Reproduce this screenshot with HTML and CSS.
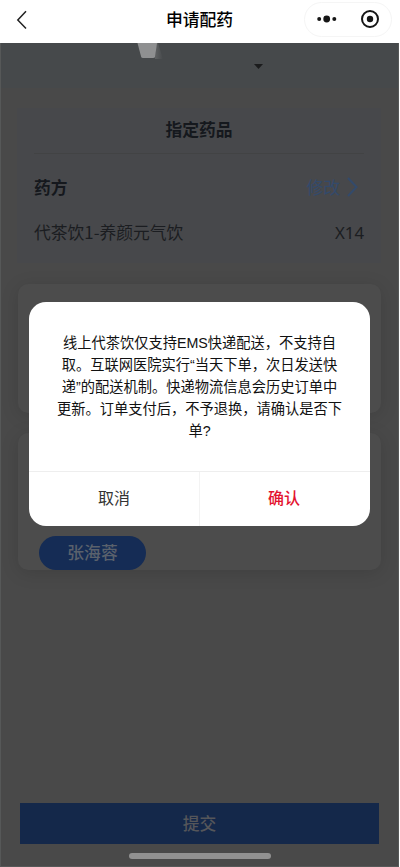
FILE: index.html
```html
<!DOCTYPE html>
<html lang="zh-CN">
<head>
<meta charset="utf-8">
<title>申请配药</title>
<link rel="stylesheet" href="styles.css">
</head>
<body>
<div class="app">
  <header class="nav">
    <svg class="back" width="12" height="20" viewBox="0 0 12 20"><path d="M10 1.200 1.800 10l8.200 8.500"/></svg>
    <h1 class="nav-title">申请配药</h1>
    <div class="capsule">
      <svg class="dots" width="20" height="10" viewBox="0 0 20 10"><circle cx="2.200" cy="5" r="2"/><circle cx="9.700" cy="5" r="3.400"/><circle cx="17.300" cy="5" r="2"/></svg>
      <span class="capsule-line"></span>
      <svg class="target" width="20" height="20" viewBox="0 0 20 20"><circle class="ring" cx="10" cy="10" r="8"/><circle cx="10" cy="10" r="3.200"/></svg>
    </div>
  </header>
  <main class="page">
    <div class="banner">
      <svg class="banner-art" width="40" height="20" viewBox="0 0 40 20"><defs><linearGradient id="fade"><stop offset="0" stop-color="#606263"/><stop offset="1" stop-color="#46494b"/></linearGradient></defs><path d="M19 0h2l5 16h-8z" fill="url(#fade)"/><path d="M.5 0H20L18 14Q17.800 15 16 15H6Q4.500 15 4.200 14Z" fill="#8f9091"/></svg>
      <svg class="caret" width="9" height="5" viewBox="0 0 9 5"><path d="M0 0h9L4.500 5z"/></svg>
    </div>
    <section class="drug-card">
      <h2 class="card-title">指定药品</h2>
      <div class="row row-head"><strong>药方</strong><span class="edit">修改<svg width="11" height="20" viewBox="0 0 11 20"><path d="M1 1l8.500 9L1 19"/></svg></span></div>
      <div class="row"><span>代茶饮1-养颜元气饮</span><span class="count">X14</span></div>
    </section>
    <section class="panel panel-first"></section>
    <section class="panel panel-second"><span class="pill">张海蓉</span></section>
    <button class="submit">提交</button>
    <div class="home-bar"></div>
  </main>
  <div class="dialog">
    <p class="message">线上代茶饮仅支持EMS快递配送，不支持自<br>取。互联网医院实行“当天下单，次日发送快<br>递”的配送机制。快递物流信息会历史订单中<br>更新。订单支付后，不予退换，请确认是否下<br>单?</p>
    <div class="actions"><button>取消</button><button class="confirm">确认</button></div>
  </div>
</div>
</body>
</html>
```
FILE: styles.css
```css
* { box-sizing: border-box; }
body { margin: 0; background: #fff; }
.app {
  position: relative;
  width: 399px;
  height: 867px;
  overflow: hidden;
  font-family: "Liberation Sans", "Noto Sans CJK SC", sans-serif;
}
h1, h2, p { margin: 0; }
button { border: 0; padding: 0; background: none; font: inherit; }

.nav {
  display: grid;
  grid-template-columns: 96px 1fr 96px;
  align-items: center;
  height: 43px;
  background: #fff;
}
.back { margin: -4px 0 0 16px; fill: none; stroke: #222; stroke-width: 1.5; }
.nav-title { text-align: center; font-size: 16.800px; line-height: 24px; font-weight: 500; color: #000; margin-top: -1px; }
.capsule {
  display: flex;
  align-items: center;
  width: 88px;
  height: 35px;
  margin: -5px 0 0 1px;
  padding: 0 12px;
  border: 1px solid #f5f5f5;
  border-radius: 18px;
  fill: #161616;
}
.capsule-line { width: 1px; height: 22px; margin: 0 12px 0 11px; background: #f0f0f0; }
.dots, .target { flex: none; }
.ring { fill: none; stroke: #161616; stroke-width: 2; }

.page {
  display: flex;
  flex-direction: column;
  height: 824px;
  background: #494949;
  border: solid #565858;
  border-width: 0 1px 1px;
}
.banner {
  display: flex;
  align-items: flex-start;
  height: 45px;
  padding-left: 136px;
  background: #46494b;
}
.caret { margin: 21px 0 0 77px; fill: #1b1c1d; }
.drug-card {
  height: 155px;
  margin: 20px 17px 0 16px;
  padding: 0 17px;
  background: #47484b;
  color: #1b1d21;
  font-size: 16.800px;
}
.card-title {
  height: 46px;
  border-bottom: 1px solid #424344;
  line-height: 46px;
  text-align: center;
  font-size: 16.800px;
  font-weight: 700;
  color: #15181d;
}
.row { display: flex; justify-content: space-between; align-items: center; height: 45px; font-family: "Noto Sans CJK SC", sans-serif; }
.row-head { height: 66px; }
.row:last-child { height: 24px; }
.row strong { color: #15181d; }
.count { font-family: "Noto Sans", sans-serif; }
.edit { display: flex; align-items: center; gap: 7px; padding-right: 6px; color: #334a6b; }
.edit svg { fill: none; stroke: #334a6b; stroke-width: 2; }

.panel {
  flex: none;
  margin: 0 17px;
  border-radius: 10px;
  background: #4c4c4c;
  box-shadow: 0 3px 18px rgba(0, 0, 0, .13);
}
.panel-first { height: 129px; margin-top: 21px; }
.panel-second { display: flex; align-items: flex-end; height: 137px; margin-top: 20px; padding-left: 21px; }
.pill {
  width: 107px;
  height: 34px;
  border-radius: 17px;
  background: #152c55;
  color: #5a616c;
  text-align: center;
  font-size: 16.800px;
  line-height: 35px;
  font-weight: 500;
}
.submit {
  flex: none;
  height: 41px;
  margin: 233px 19px 0;
  padding-top: 2px;
  background: #14284a;
  color: #55565a;
  font-size: 16.800px;
  line-height: 39px;
  font-weight: 500;
}
.home-bar { flex: none; width: 142px; height: 6px; margin: 9px 0 0 128px; border-radius: 3px; background: #919191; }

.dialog {
  position: absolute;
  left: 29px;
  top: 302px;
  display: flex;
  flex-direction: column;
  width: 341px;
  height: 224px;
  border-radius: 17px;
  background: #fff;
}
.message {
  flex: 1;
  padding-top: 31px;
  text-align: center;
  font-size: 14.250px;
  line-height: 21.900px;
  white-space: nowrap;
  color: #111;
}
.actions { display: grid; grid-template-columns: 170px 1fr; height: 55px; border-top: 1px solid #eee; font-size: 16px; }
.actions button { padding-bottom: 4px; color: #333; }
.actions .confirm { padding-right: 2px; border-left: 1px solid #f3f3f3; color: #e3132f; font-weight: 500; }
```
